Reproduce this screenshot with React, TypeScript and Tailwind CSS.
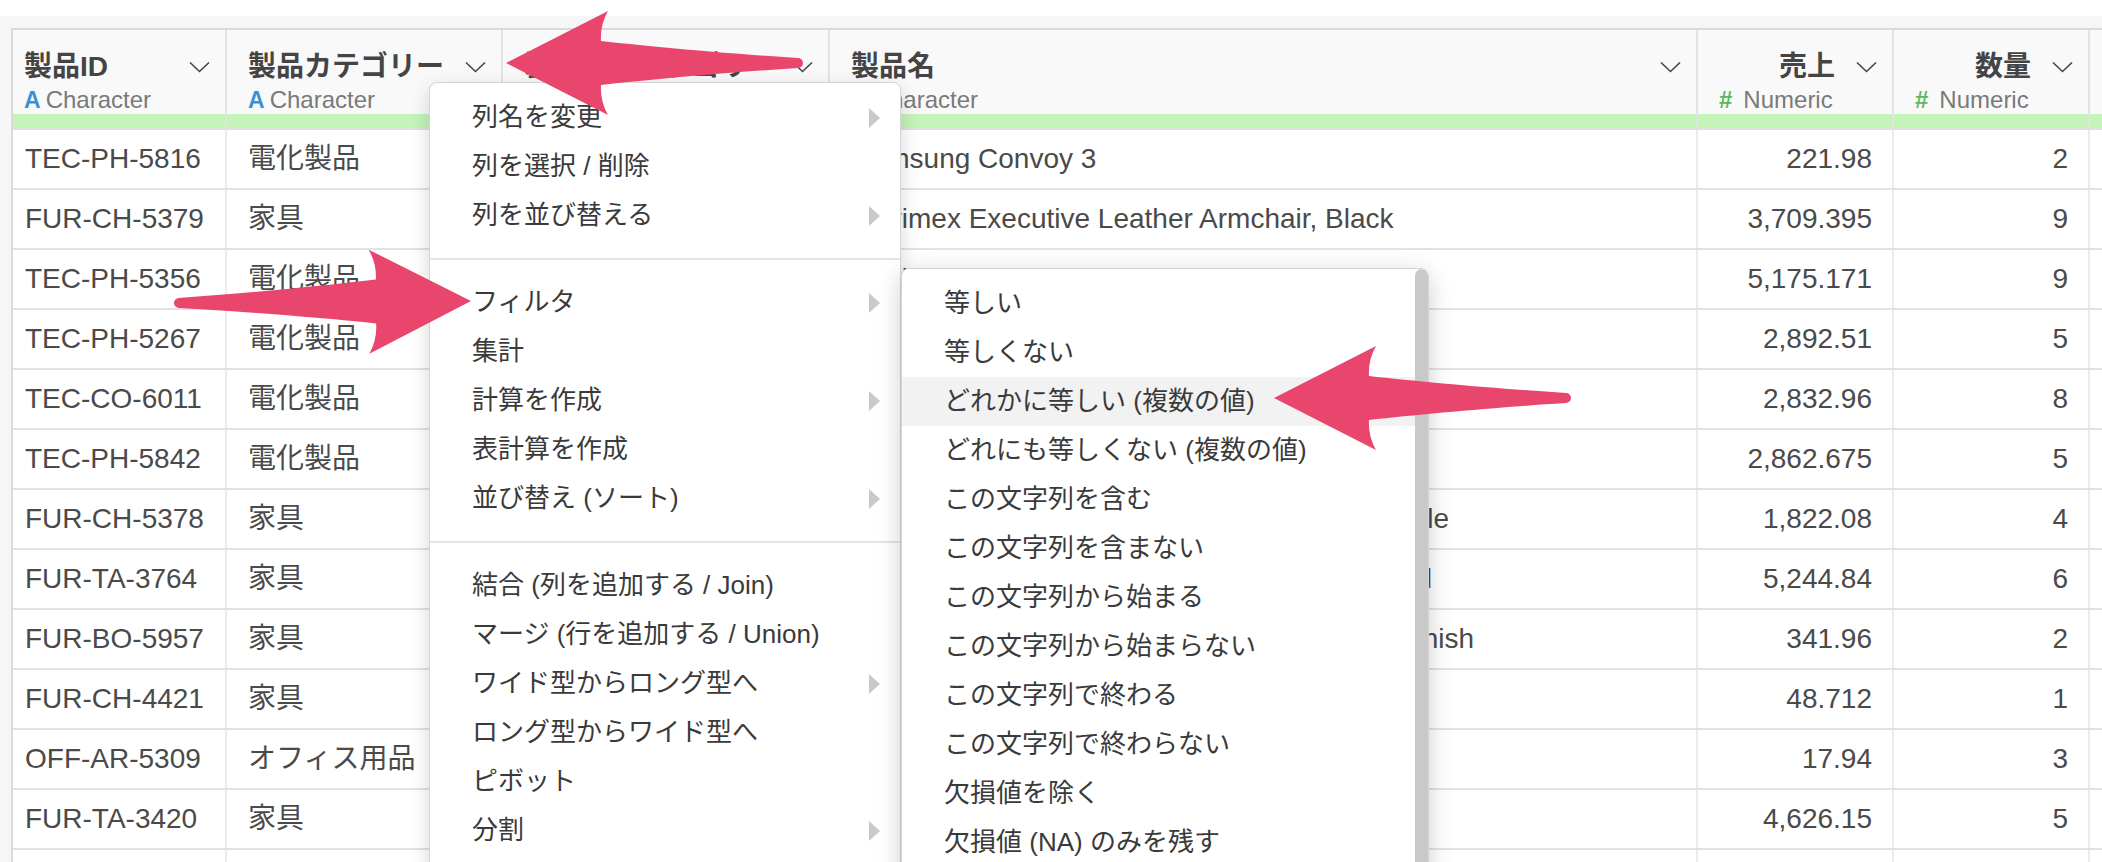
import React from "react";

// Data grid with a column context menu + filter submenu and annotation arrows

type Row = {
	id: string;
	cat: string;
	sub: string;
	name: string;
	sales: string;
	qty: string;
};

const rows: Row[] = [
	{ id: "TEC-PH-5816", cat: "電化製品", sub: "電話", name: "Samsung Convoy 3", sales: "221.98", qty: "2" },
	{ id: "FUR-CH-5379", cat: "家具", sub: "椅子", name: "Novimex Executive Leather Armchair, Black", sales: "3,709.395", qty: "9" },
	{ id: "TEC-PH-5356", cat: "電化製品", sub: "電話", name: "Nokia Smart Phone, with Caller ID", sales: "5,175.171", qty: "9" },
	{ id: "TEC-PH-5267", cat: "電化製品", sub: "電話", name: "Motorola Smart Phone, Cordless", sales: "2,892.51", qty: "5" },
	{ id: "TEC-CO-6011", cat: "電化製品", sub: "コピー機", name: "Sharp Wireless Fax, High-Speed", sales: "2,832.96", qty: "8" },
	{ id: "TEC-PH-5842", cat: "電化製品", sub: "電話", name: "Samsung Smart Phone, with Caller ID", sales: "2,862.675", qty: "5" },
	{ id: "FUR-CH-5378", cat: "家具", sub: "椅子", name: "Novimex Swivel Fabric Office Chairs, Adjustable", sales: "1,822.08", qty: "4" },
	{ id: "FUR-TA-3764", cat: "家具", sub: "テーブル", name: "Bevis Oval Conference Table, Fully Assembled", sales: "5,244.84", qty: "6" },
	{ id: "FUR-BO-5957", cat: "家具", sub: "本棚", name: "Bush Westfield Collection Bookcase, Maple Finish", sales: "341.96", qty: "2" },
	{ id: "FUR-CH-4421", cat: "家具", sub: "椅子", name: "Hon Swivel Stool, Red", sales: "48.712", qty: "1" },
	{ id: "OFF-AR-5309", cat: "オフィス用品", sub: "画材", name: "Sanford Pencil Sharpener", sales: "17.94", qty: "3" },
	{ id: "FUR-TA-3420", cat: "家具", sub: "テーブル", name: "Bevis Computer Table", sales: "4,626.15", qty: "5" },
	{ id: "OFF-BI-4828", cat: "オフィス用品", sub: "バインダー", name: "Acco Binder, Clear", sales: "25.38", qty: "2" },
];

const mainMenu: [string, boolean][][] = [
	[
		["列名を変更", true],
		["列を選択 / 削除", false],
		["列を並び替える", true],
	],
	[
		["フィルタ", true],
		["集計", false],
		["計算を作成", true],
		["表計算を作成", false],
		["並び替え (ソート)", true],
	],
	[
		["結合 (列を追加する / Join)", false],
		["マージ (行を追加する / Union)", false],
		["ワイド型からロング型へ", true],
		["ロング型からワイド型へ", false],
		["ピボット", false],
		["分割", true],
	],
];

const filterMenu = [
	"等しい",
	"等しくない",
	"どれかに等しい (複数の値)",
	"どれにも等しくない (複数の値)",
	"この文字列を含む",
	"この文字列を含まない",
	"この文字列から始まる",
	"この文字列から始まらない",
	"この文字列で終わる",
	"この文字列で終わらない",
	"欠損値を除く",
	"欠損値 (NA) のみを残す",
];

const ARROW_PATH =
	"M298 0 L196 -52 Q204 -38 203 -22 C150 -16 70 -9 6 -5 A5 5 0 0 0 6 5 C70 9 150 16 203 22 Q204 38 196 52 Z";

const Chevron = () => (
	<svg width="21" height="12" viewBox="0 0 21 12" fill="none">
		<path d="M1 1.5L10.5 10.5L20 1.5" stroke="#444" strokeWidth="1.6" />
	</svg>
);

const SubArrow = () => (
	<svg width="11" height="20" viewBox="0 0 11 20">
		<path d="M0 0L11 10L0 20Z" fill="#c9c9c9" />
	</svg>
);

const TypeLabel = ({ numeric }: { numeric?: boolean }) =>
	numeric ? (
		<div className="h-[28px] flex items-center gap-[11px]">
			<span className="text-[24px] font-bold text-[#5cb85c] leading-none">#</span>
			<span className="text-[24px] text-[#7a7a7a] leading-none">Numeric</span>
		</div>
	) : (
		<div className="h-[28px] flex items-center gap-[5px]">
			<span className="text-[23px] font-bold text-[#3d8fd8] leading-none">A</span>
			<span className="text-[24px] text-[#7a7a7a] leading-none">Character</span>
		</div>
	);

const HeaderCell = ({
	width,
	title,
	numeric,
	first,
}: {
	width: string;
	title: string;
	numeric?: boolean;
	first?: boolean;
}) => (
	<div className={`${width} shrink-0 border-r-2 border-[#e3e3e3] flex flex-col`}>
		<div className={`h-[84px] bg-[#f9f9f9] pt-[18px] pr-[15px] ${first ? "pl-[11px]" : "pl-[21px]"}`}>
			<div className={`h-[38px] flex items-center ${numeric ? "justify-end gap-[21px]" : "justify-between"}`}>
				<span className="text-[28px] font-bold text-[#444] whitespace-nowrap">{title}</span>
				<Chevron />
			</div>
			<TypeLabel numeric={numeric} />
		</div>
		<div className="h-[14px] bg-[#c4f4b9]" />
	</div>
);

const DataRow = ({ row }: { row: Row }) => (
	<div className="flex h-[60px] border-b-2 border-[#e2e2e2] text-[28px] text-[#4a4a4a] whitespace-nowrap">
		<div className="w-[214px] shrink-0 border-r-2 border-[#ececec] flex items-center pl-[12px]">{row.id}</div>
		<div className="w-[276px] shrink-0 border-r-2 border-[#ececec] flex items-center pl-[21px]">{row.cat}</div>
		<div className="w-[327px] shrink-0 border-r-2 border-[#ececec] flex items-center pl-[21px]">{row.sub}</div>
		<div className="w-[868px] shrink-0 border-r-2 border-[#ececec] flex items-center pl-[22px] overflow-hidden">{row.name}</div>
		<div className="w-[196px] shrink-0 border-r-2 border-[#ececec] flex items-center justify-end pr-[20px]">{row.sales}</div>
		<div className="w-[196px] shrink-0 border-r-2 border-[#ececec] flex items-center justify-end pr-[20px]">{row.qty}</div>
		<div className="flex-1" />
	</div>
);

const ColumnMenu = () => (
	<div className="absolute left-[429px] top-[82px] w-[472px] h-[800px] bg-white border border-[#d5d5d5] rounded-[8px] shadow-[0_6px_20px_rgba(0,0,0,0.16)] pt-[10px] text-[26px] text-[#3a3a3a]">
		{mainMenu.map((group, gi) => (
			<div key={gi}>
				{gi > 0 && <div className="my-[18px] h-[2px] bg-[#e4e4e4]" />}
				{group.map(([label, sub]) => (
					<div key={label} className="h-[49px] flex items-center justify-between pl-[42px] pr-[20px] whitespace-nowrap">
						<span>{label}</span>
						{sub && <SubArrow />}
					</div>
				))}
			</div>
		))}
	</div>
);

const FilterMenu = () => (
	<div className="absolute left-[901px] top-[268px] w-[528px] h-[620px] bg-white border border-[#d5d5d5] rounded-[8px] shadow-[0_6px_24px_rgba(0,0,0,0.2)] overflow-hidden flex text-[26px] text-[#3a3a3a]">
		<div className="flex-1 pt-[10px]">
			{filterMenu.map((label, i) => (
				<div
					key={label}
					className={`h-[49px] flex items-center pl-[42px] whitespace-nowrap ${i === 2 ? "bg-[#f2f2f2]" : ""}`}
				>
					{label}
				</div>
			))}
		</div>
		<div className="w-[13px] shrink-0 bg-[#c9c9c9] rounded-t-[7px]" />
	</div>
);

const Arrows = () => (
	<svg className="absolute left-0 top-0 pointer-events-none" width="2102" height="862" viewBox="0 0 2102 862">
		<g fill="#e9466e">
			<path d={ARROW_PATH} transform="translate(804 63) scale(-1 1)" />
			<path d={ARROW_PATH} transform="translate(173 303) rotate(-0.4)" />
			<path d={ARROW_PATH} transform="translate(1572 398) scale(-1 1)" />
		</g>
	</svg>
);

export default function App() {
	return (
		<div className="relative w-[2102px] h-[862px] overflow-hidden bg-white font-['Liberation_Sans','Noto_Sans_CJK_JP',sans-serif]">
			<div className="mt-[16px] h-[846px] bg-[#f6f6f6] pl-[11px] pt-[12px]">
				<div className="h-full border-l-2 border-t-2 border-[#dadada] bg-white">
					<div className="flex border-b-2 border-[#e0e0e0]">
						<HeaderCell width="w-[214px]" title="製品ID" first />
						<HeaderCell width="w-[276px]" title="製品カテゴリー" />
						<HeaderCell width="w-[327px]" title="製品サブカテゴリー" />
						<HeaderCell width="w-[868px]" title="製品名" />
						<HeaderCell width="w-[196px]" title="売上" numeric />
						<HeaderCell width="w-[196px]" title="数量" numeric />
						<div className="flex-1 flex flex-col">
							<div className="h-[84px] bg-[#f9f9f9]" />
							<div className="h-[14px] bg-[#c4f4b9]" />
						</div>
					</div>
					{rows.map((row) => (
						<DataRow key={row.id} row={row} />
					))}
				</div>
			</div>

			<ColumnMenu />
			<FilterMenu />
			<Arrows />
		</div>
	);
}
